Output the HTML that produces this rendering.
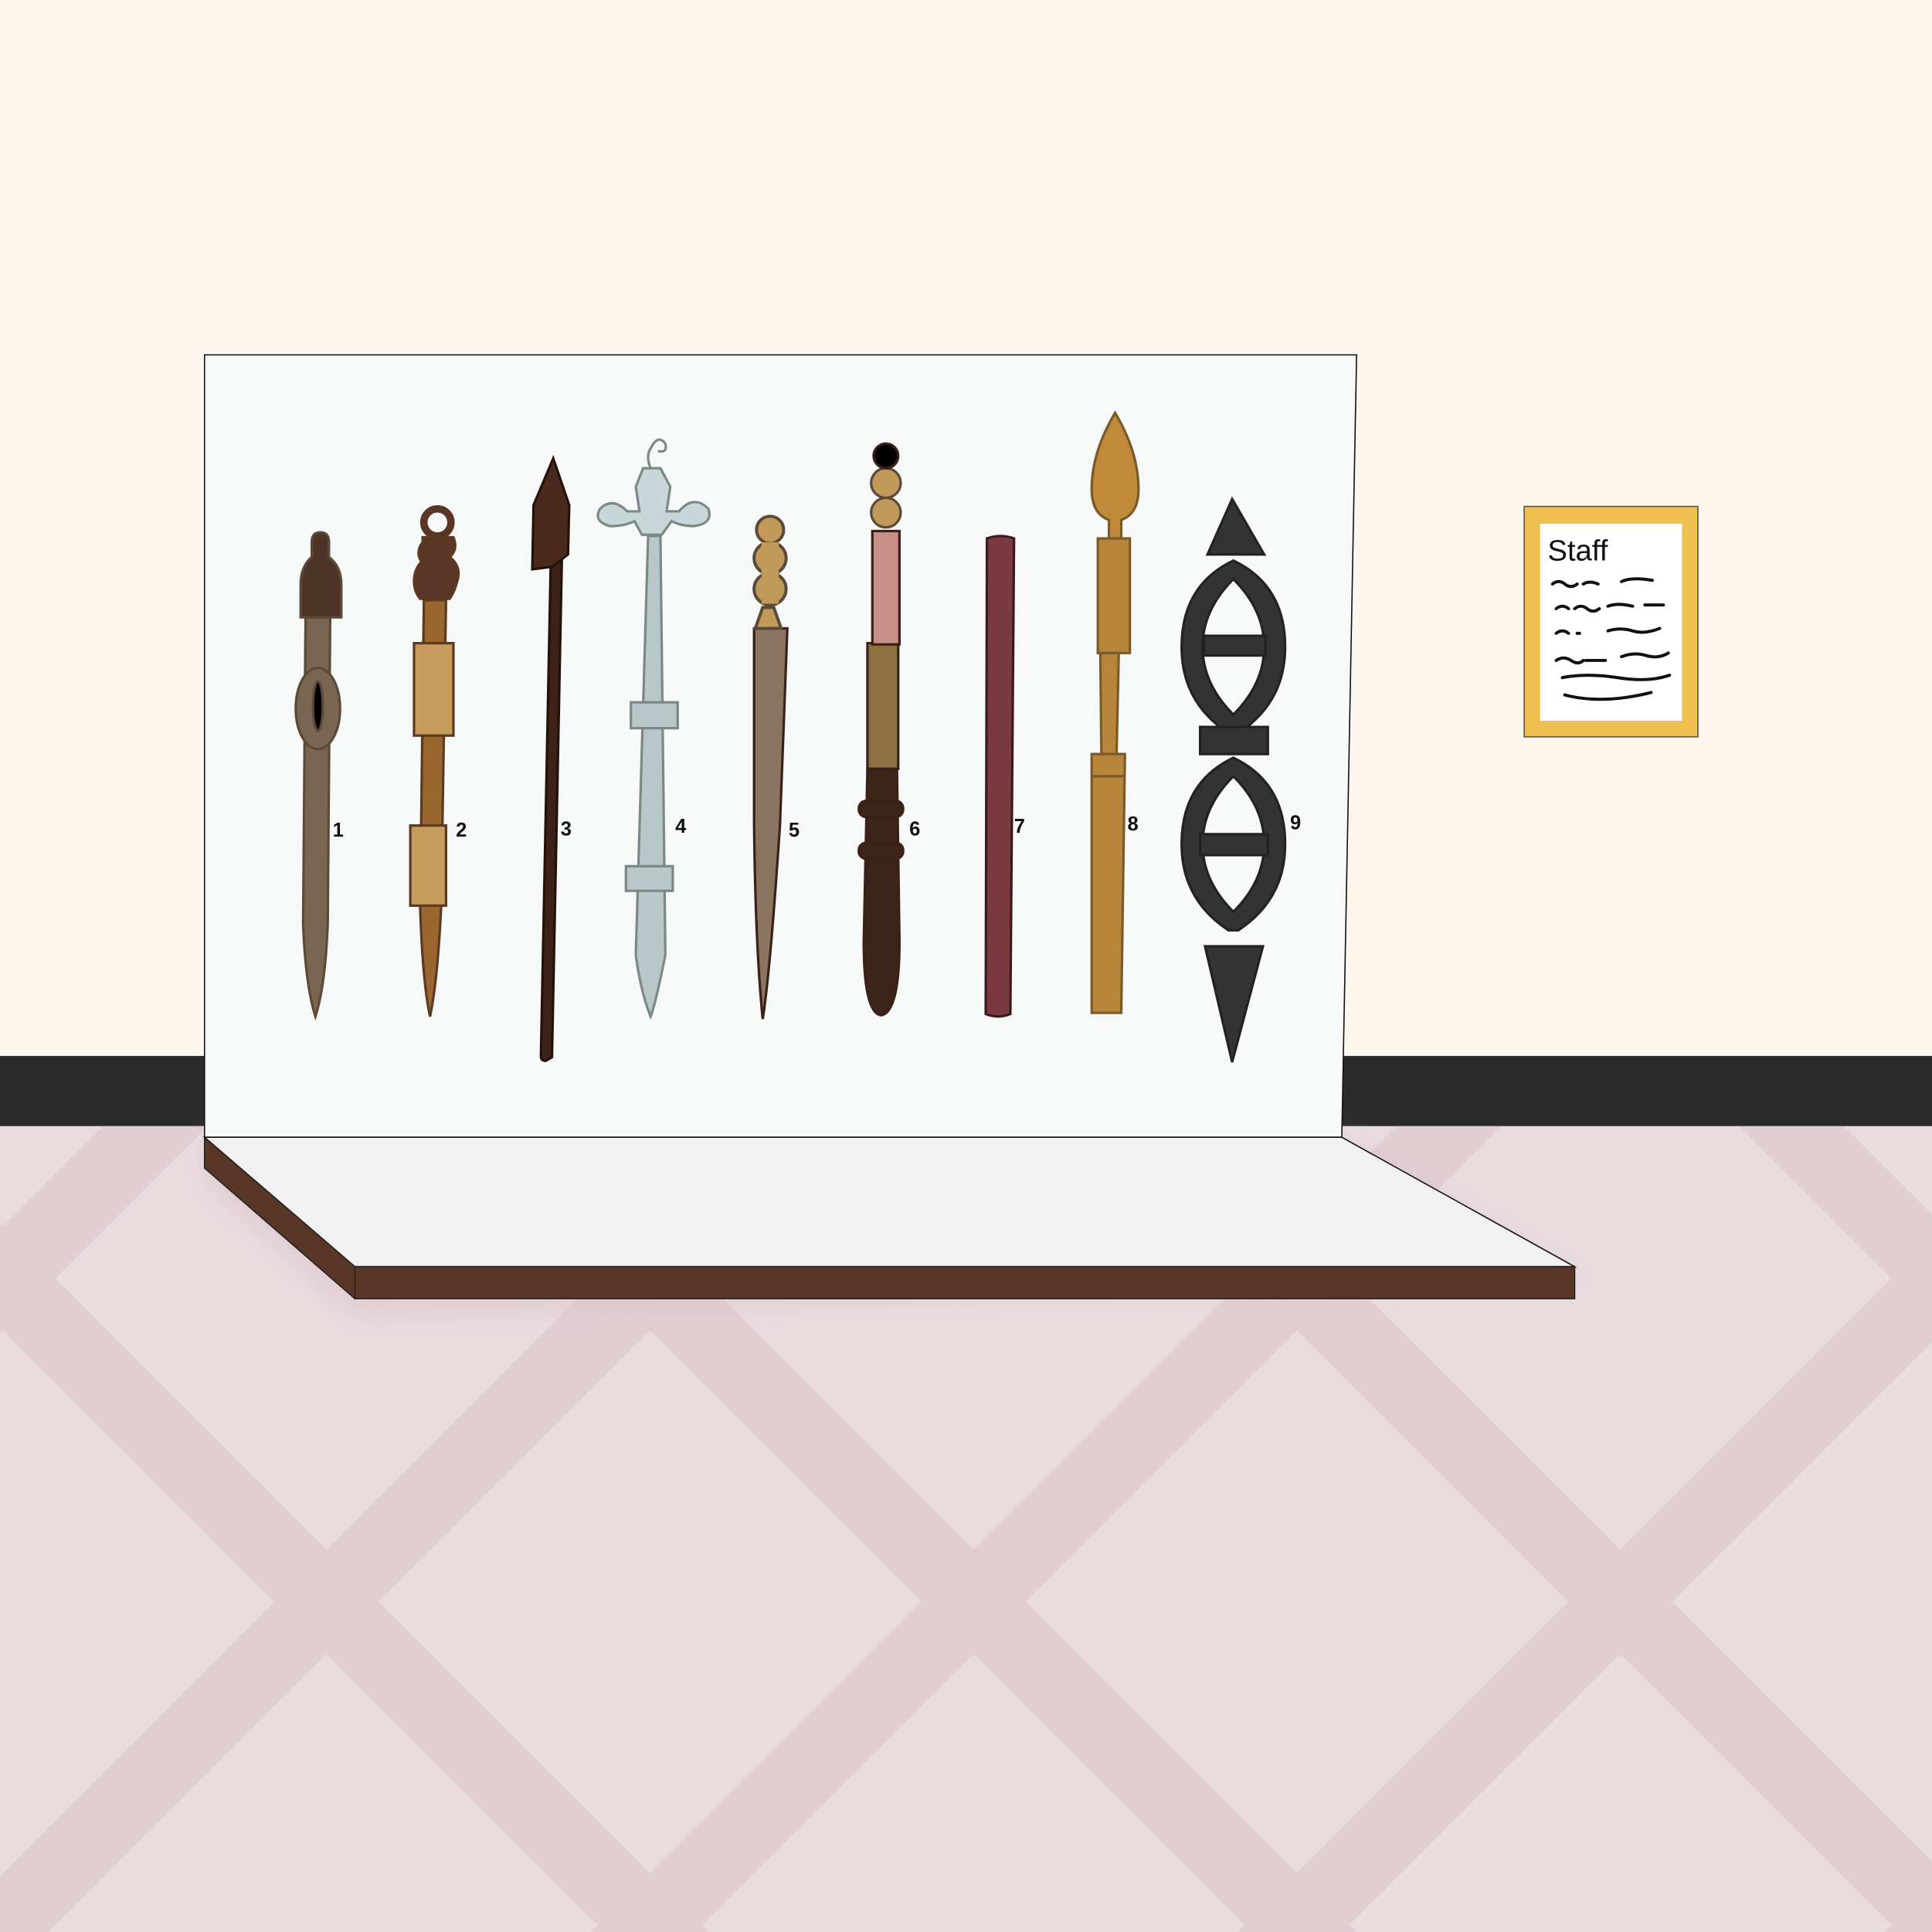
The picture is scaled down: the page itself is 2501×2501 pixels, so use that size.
<!DOCTYPE html>
<html><head><meta charset="utf-8"><style>html,body{margin:0;padding:0;background:#fdf6ee;width:2501px;height:2501px;overflow:hidden}svg{display:block}</style></head>
<body>
<svg width="2501" height="2501" viewBox="0 0 1568 1568" xmlns="http://www.w3.org/2000/svg">
<defs>
<clipPath id="fl"><rect x="0" y="914" width="1568" height="654"/></clipPath>
<filter id="sh" x="-20%" y="-50%" width="140%" height="200%"><feGaussianBlur stdDeviation="10"/></filter>
</defs>
<rect width="1568" height="857" fill="#fdf6ee"/>
<rect y="857" width="1568" height="57" fill="#2b2b2b"/>
<rect y="914" width="1568" height="654" fill="#e9dcdf"/>
<g clip-path="url(#fl)" stroke="#e1ced3" stroke-width="60" fill="none">
<line x1="-600" y1="435" x2="1600" y2="2635"/>
<line x1="-600" y1="-90" x2="1600" y2="2110"/>
<line x1="-75" y1="-90" x2="2125" y2="2110"/>
<line x1="450" y1="-90" x2="2650" y2="2110"/>
<line x1="975" y1="-90" x2="3175" y2="2110"/>
<line x1="1500" y1="-90" x2="3700" y2="2110"/>
<line x1="-600" y1="1640" x2="1640" y2="-600"/>
<line x1="-600" y1="2165" x2="2165" y2="-600"/>
<line x1="-600" y1="2690" x2="2690" y2="-600"/>
<line x1="-600" y1="3215" x2="3215" y2="-600"/>
<line x1="-600" y1="3740" x2="3740" y2="-600"/>
</g>
<polygon points="166,923 1089,923 1290,1040 288,1070 166,960" fill="#d9c0c8" opacity=".5" filter="url(#sh)"/>
<!-- board -->
<polygon points="166,288 1101,288 1089,923 166,923" fill="#f7f9f8" stroke="#111" stroke-width="1"/>
<!-- shelf -->
<polygon points="166,923 1089,923 1278,1028 288,1028" fill="#f1f1f1" stroke="#111" stroke-width="1"/>
<polygon points="166,923 288,1028 288,1054 166,948" fill="#5a3626" stroke="#222" stroke-width="1"/>
<rect x="288" y="1028" width="990" height="26" fill="#5a3626" stroke="#222" stroke-width="1"/>
<!-- sign -->
<rect x="1237" y="411" width="141" height="187" fill="#efc050" stroke="#555" stroke-width="1"/>
<rect x="1250" y="425" width="115" height="160" fill="#fff"/>
<text x="1256" y="455" font-family="Liberation Sans, sans-serif" font-size="24" fill="#111">Staff</text>
<g stroke="#111" stroke-width="2.5" fill="none" stroke-linecap="round">
<path d="M1260 474q5-4 10 0t10 0M1285 474q5-3 12 0M1316 472q8-4 25-1"/>
<path d="M1263 494q5-4 10 0M1278 494q5-4 10 0t10 0M1305 492q8-3 20 0M1335 491h15"/>
<path d="M1263 514q5-4 10 0M1280 514h2M1305 512q10-3 20 0t22-2"/>
<path d="M1263 536q6-4 12 0t10 0M1287 536h16M1316 533q10-4 20-1t18-2"/>
<path d="M1268 550q20-4 45 0t42-2"/>
<path d="M1270 564q30 8 70-2"/>
</g>
<!-- staff 1 -->
<g stroke="#5a4a3a" stroke-width="2">
<path d="M248 500h20l-2 250q-2 50-10 75q-8-25-10-75z" fill="#7a6650"/>
<path d="M253 440q0-8 7-8q7 0 7 8v12q10 8 10 22v27h-33v-27q0-14 9-22z" fill="#4e3426"/>
<ellipse cx="258" cy="575" rx="18" ry="33" fill="#7a6650"/>
<ellipse cx="258" cy="573" rx="4" ry="20" fill="#000"/>
</g>
<!-- staff 2 -->
<g stroke="#5a3a20" stroke-width="2">
<path d="M344 487h18l-4 250q-3 60-9 88q-6-28-8-88z" fill="#9a6630"/>
<rect x="336" y="522" width="32" height="75" fill="#c89c5c"/>
<rect x="333" y="670" width="29" height="65" fill="#c89c5c"/>
<circle cx="355" cy="424" r="11" fill="none" stroke="#5a3626" stroke-width="6"/>
<path d="M343 436h25q4 10-3 16q10 8 6 20q-2 8-6 14h-24q-5-6-5-14q0-10 6-16q-5-8 1-16z" fill="#5a3626"/>
</g>
<!-- staff 3 -->
<path d="M447 455l-8 402q0 4 4 4l5-3l8-403z" fill="#3c2218" stroke="#241208" stroke-width="2"/>
<polygon points="432,462 433,410 449,372 462,410 461,450 448,460" fill="#4a2a1c" stroke="#241208" stroke-width="2"/>
<!-- staff 4 -->
<g stroke="#7a8888" stroke-width="2" fill="#b8c8c8">
<path d="M526 435h10l4 340q-8 40-12 50q-8-20-12-50z"/>
<rect x="512" y="570" width="38" height="21"/>
<rect x="508" y="703" width="38" height="20"/>
<path d="M522 380h14l8 15l-3 20h10q12-14 24-2q4 12-12 14q-10 0-18-4l-8 11h-16l-6-11q-8 4-20 4q-14-4-8-14q10-10 22 2h10l-3-20z" fill="#c8d8d8"/>
<path d="M528 380q-4-10 0-16q6-12 12-4q2 8-6 6" fill="none"/>
</g>
<!-- staff 5 -->
<g stroke="#3a2018" stroke-width="2">
<path d="M612 510h27l-6 160q-8 120-14 157q-6-60-7-160z" fill="#8c7560"/>
</g>
<g stroke="#5a4a3a" stroke-width="2.5" fill="#c19a5a">
<path d="M619 493l-6 17h21l-6-17z"/>
<circle cx="625" cy="478" r="13"/><circle cx="625" cy="453" r="13"/><circle cx="625" cy="430" r="11"/>
<rect x="618" y="440" width="14" height="50" stroke="none"/>
</g>
<!-- staff 6 -->
<g stroke="#3a2018" stroke-width="2">
<rect x="704" y="522" width="25" height="102" fill="#8c7040"/>
<rect x="708" y="431" width="22" height="92" fill="#c89086"/>
<path d="M704 624h24l2 140q0 58-15 60q-14-2-14-60z" fill="#3c2418"/>
<rect x="697" y="650" width="36" height="13" rx="6" fill="#3c2418"/>
<rect x="697" y="684" width="36" height="13" rx="6" fill="#3c2418"/>
<circle cx="719" cy="416" r="12" fill="#c19a5a" stroke="#5a4a3a"/>
<circle cx="719" cy="392" r="12" fill="#c19a5a" stroke="#5a4a3a"/>
<circle cx="719" cy="370" r="10" fill="#000"/>
</g>
<!-- staff 7 -->
<path d="M801 437q11-4 22 0l-3 386q-10 4-20 0z" fill="#7a3a40" stroke="#3a1a1c" stroke-width="2"/>
<!-- staff 8 -->
<g stroke="#7a5a28" stroke-width="2" fill="#b8863a">
<path d="M893 530h15l-2 92h-12z"/>
<rect x="891" y="437" width="26" height="93"/>
<path d="M886 612h27l-3 210h-24z"/>
<line x1="886" y1="630" x2="913" y2="630"/>
<path d="M900 437v-15q-14-5-14-25q0-30 19-62q19 32 19 62q0 20-14 25v15z" fill="#c08a3a"/>
</g>
<!-- staff 9 -->
<g fill="#333" stroke="#222" stroke-width="2">
<polygon points="1000,405 1026,450 980,450"/>
<path d="M1001 455q-42 20-42 70q0 45 38 70h8q38-25 38-70q0-50-42-70zM1001 470q-25 25-25 55t25 55q25-25 25-55t-25-55z" fill-rule="evenodd"/>
<rect x="977" y="516" width="50" height="16"/>
<rect x="974" y="590" width="55" height="22"/>
<path d="M1001 615q-42 20-42 70q0 45 38 70h8q38-25 38-70q0-50-42-70zM1001 630q-25 25-25 55t25 55q25-25 25-55t-25-55z" fill-rule="evenodd"/>
<rect x="974" y="677" width="55" height="17"/>
<polygon points="978,768 1025,768 1000,862"/>
</g>
<!-- numbers -->
<g font-family="Liberation Sans, sans-serif" font-size="16" font-weight="bold" fill="#111">
<text x="270" y="679">1</text><text x="370" y="679">2</text><text x="455" y="678">3</text>
<text x="548" y="676">4</text><text x="640" y="679">5</text><text x="738" y="678">6</text>
<text x="823" y="676">7</text><text x="915" y="674">8</text><text x="1047" y="673">9</text>
</g>
</svg>
</body></html>
